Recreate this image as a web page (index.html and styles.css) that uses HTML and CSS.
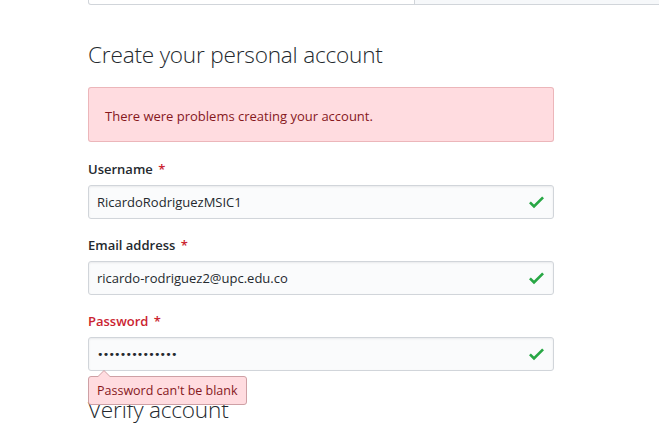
FILE: index.html
```html
<!DOCTYPE html>
<html>
<head>
<meta charset="utf-8">
<link rel="stylesheet" href="styles.css">
</head>
<body>
<div class="tabs">
  <div class="tab tab-active"></div>
  <div class="tab tab-rest"></div>
</div>
<main class="signup">
  <h1 class="title">Create your personal account</h1>
  <div class="flash-error">There were problems creating your account.</div>

  <div class="field">
    <label class="label">Username <span class="req">*</span></label>
    <div class="input">
      <span class="value">RicardoRodriguezMSIC1</span>
      <svg class="check" viewBox="0 0 12 16" width="15" height="20"><path d="M12 5l-8 8-4-4 1.5-1.5L4 10l6.5-6.5z" fill="#28a745"/></svg>
    </div>
  </div>

  <div class="field">
    <label class="label">Email address <span class="req">*</span></label>
    <div class="input">
      <span class="value">ricardo-rodriguez2@upc.edu.co</span>
      <svg class="check" viewBox="0 0 12 16" width="15" height="20"><path d="M12 5l-8 8-4-4 1.5-1.5L4 10l6.5-6.5z" fill="#28a745"/></svg>
    </div>
  </div>

  <div class="field field-error">
    <label class="label label-error">Password <span class="req">*</span></label>
    <div class="input">
      <span class="value dots">••••••••••••••</span>
      <svg class="check" viewBox="0 0 12 16" width="15" height="20"><path d="M12 5l-8 8-4-4 1.5-1.5L4 10l6.5-6.5z" fill="#28a745"/></svg>
    </div>
    <div class="error-tip">Password can't be blank</div>
  </div>

  <h2 class="title title-2">Verify account</h2>
</main>
</body>
</html>
```
FILE: styles.css
```css
* { box-sizing: border-box; }
html, body { margin: 0; background: #fff; }
body {
  font-family: "Open Sans", "Noto Sans", sans-serif;
  color: #24292e;
  overflow: hidden;
}
.tabs {
  display: flex;
  height: 5px;
  margin-left: 88px;
}
.tab {
  border-bottom: 1px solid #d1d5da;
}
.tab-active {
  width: 327px;
  border-left: 1px solid #d1d5da;
  border-right: 1px solid #d1d5da;
  border-bottom-left-radius: 3px;
}
.tab-rest {
  flex: 1;
  background: #f6f8fa;
}
.signup {
  width: 466px;
  margin-left: 88px;
}
.title {
  font-weight: 300;
  font-size: 22.6px;
  line-height: 30px;
  margin: 35px 0 0;
  color: #24292e;
  letter-spacing: -0.2px;
}
.flash-error {
  margin-top: 17px;
  height: 55px;
  padding: 18px 16px 0 16px;
  background: #ffdce0;
  border: 1px solid rgba(158, 28, 35, 0.2);
  border-radius: 3px;
  color: #86181d;
  font-size: 13px;
  line-height: 20px;
}
.field { margin-top: 17px; position: relative; }
.field + .field { margin-top: 16px; }
.label {
  display: block;
  font-weight: 600;
  font-size: 13px;
  line-height: 20px;
  margin-bottom: 6px;
}
.label-error { color: #cb2431; }
.req { color: #cb2431; margin-left: 2px; }
.input {
  height: 34px;
  display: flex;
  align-items: center;
  justify-content: space-between;
  padding: 0 9px 0 8px;
  background: #fafbfc;
  border: 1px solid #d1d5da;
  border-radius: 3px;
  box-shadow: inset 0 1px 2px rgba(27,31,35,0.075);
  font-size: 13px;
  color: #24292e;
}
.dots {
  font-size: 11px;
  letter-spacing: -0.8px;
  font-family: "DejaVu Sans", sans-serif;
}
.check { display: block; }
.error-tip {
  position: absolute;
  left: 0;
  top: 65px;
  z-index: 2;
  padding: 5px 8px 4px;
  font-size: 12.5px;
  line-height: 18px;
  color: #86181d;
  background: #ffdce0;
  border: 1px solid #cea0a5;
  border-radius: 3px;
}
.error-tip::before, .error-tip::after {
  content: "";
  position: absolute;
  left: 9px;
  border: 6px solid transparent;
}
.error-tip::before {
  top: -13px;
  border-bottom-color: #cea0a5;
}
.error-tip::after {
  top: -12px;
  border-bottom-color: #ffdce0;
}
.title-2 { margin-top: 24px; }
```
